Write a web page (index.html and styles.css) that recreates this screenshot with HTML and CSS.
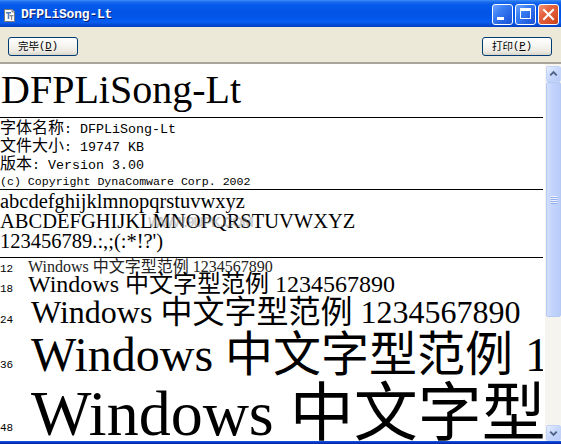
FILE: index.html
```html
<!DOCTYPE html>
<html lang="zh-CN">
<head>
<meta charset="utf-8">
<title>DFPLiSong-Lt</title>
<link rel="stylesheet" href="styles.css">
</head>
<body>
<div class="window">
  <div class="titlebar">
    <svg class="app-icon" width="13" height="13" viewBox="0 0 13 13">
      <path d="M1.5 0.5 H9 L11.5 3 V12.5 H1.5 Z" fill="#fff" stroke="#7a7a7a"/>
      <path d="M9 0.5 V3 H11.5" fill="#dcdcdc" stroke="#7a7a7a"/>
      <rect x="3" y="3" width="5" height="1.6" fill="#5a7fb8"/>
      <rect x="4.7" y="3" width="1.6" height="7" fill="#5a7fb8"/>
      <rect x="6.5" y="6" width="4" height="1.3" fill="#8a8a8a"/>
      <rect x="7.9" y="6" width="1.3" height="5" fill="#8a8a8a"/>
    </svg>
    <span class="title">DFPLiSong-Lt</span>
    <div class="caption-buttons">
      <div class="cbtn cbtn-blue"><span class="min-bar"></span></div>
      <div class="cbtn cbtn-blue"><span class="max-box"></span></div>
      <div class="cbtn cbtn-close">
        <svg width="19" height="19" viewBox="0 0 19 19"><path d="M5 5 L14 14 M14 5 L5 14" stroke="#fff" stroke-width="2" stroke-linecap="square"/></svg>
      </div>
    </div>
  </div>

  <div class="toolbar">
    <div class="btn"><span class="cjk-ui">完毕</span><span class="ui-latin">(<u>D</u>)</span></div>
    <div class="btn"><span class="cjk-ui">打印</span><span class="ui-latin">(<u>P</u>)</span></div>
  </div>

  <div class="client">
    <div class="content">
      <div class="heading">DFPLiSong-Lt</div>

      <div class="info">
        <div class="info-line"><span class="cjk">字体名称</span>: DFPLiSong-Lt</div>
        <div class="info-line"><span class="cjk">文件大小</span>: 19747 KB</div>
        <div class="info-line"><span class="cjk">版本</span>: Version 3.00</div>
        <div class="info-copy">(c) Copyright DynaComware Corp. 2002</div>
      </div>

      <div class="alphabet">
        <div class="alpha-line">abcdefghijklmnopqrstuvwxyz</div>
        <div class="alpha-line">ABCDEFGHIJKLMNOPQRSTUVWXYZ</div>
        <div class="alpha-line">123456789.:,;(:*!?')</div>
        <span class="watermark">WWW.9UPK.COM</span>
      </div>

      <div class="samples">
        <div class="sample-row row-12"><span class="size-label">12</span><span class="sample">Windows 中文字型范例 1234567890</span></div>
        <div class="sample-row row-18"><span class="size-label">18</span><span class="sample">Windows 中文字型范例 1234567890</span></div>
        <div class="sample-row row-24"><span class="size-label">24</span><span class="sample">Windows 中文字型范例 1234567890</span></div>
        <div class="sample-row row-36"><span class="size-label">36</span><span class="sample">Windows 中文字型范例 1234567890</span></div>
        <div class="sample-row row-48"><span class="size-label">48</span><span class="sample">Windows 中文字型范例 1234567890</span></div>
      </div>
    </div>

    <div class="scrollbar">
      <div class="sb-btn">
        <svg width="14" height="14" viewBox="0 0 14 14"><path d="M3.5 8.5 L7 5 L10.5 8.5" fill="none" stroke="#4d6185" stroke-width="2"/></svg>
      </div>
      <div class="sb-thumb">
        <span class="grip"></span><span class="grip"></span><span class="grip"></span><span class="grip"></span>
      </div>
      <div class="sb-track"></div>
      <div class="sb-btn">
        <svg width="14" height="14" viewBox="0 0 14 14"><path d="M3.5 5.5 L7 9 L10.5 5.5" fill="none" stroke="#4d6185" stroke-width="2"/></svg>
      </div>
    </div>
  </div>

  <div class="frame-bottom"></div>
</div>
</body>
</html>
```

FILE: styles.css
```css
html, body {
  margin: 0;
  padding: 0;
}

body {
  width: 561px;
  height: 444px;
  overflow: hidden;
  background: #ffffff;
}

.window {
  display: flex;
  flex-direction: column;
  width: 561px;
  height: 444px;
}

/* ---------- title bar ---------- */
.titlebar {
  flex: none;
  height: 27px;
  display: flex;
  align-items: center;
  background: linear-gradient(to bottom,
    #3d8cf6 0px, #1a6cf0 2px, #0659ea 5px, #0054e6 14px,
    #0359ec 20px, #0a5ff2 22px, #0449d2 25px, #0340c2 27px);
}

.app-icon {
  flex: none;
  margin-left: 3px;
  margin-top: 3px;
}

.title {
  margin-left: 5px;
  margin-top: 2px;
  font-family: "Liberation Mono", monospace;
  font-weight: bold;
  font-size: 13px;
  color: #ffffff;
  text-shadow: 1px 1px 0 #0a1d6e;
  letter-spacing: -0.2px;
}

.caption-buttons {
  margin-left: auto;
  margin-right: 2px;
  margin-top: 2px;
  display: flex;
  gap: 2px;
}

.cbtn {
  position: relative;
  width: 21px;
  height: 21px;
  box-sizing: border-box;
  border: 1px solid #ffffff;
  border-radius: 3px;
}

.cbtn-blue {
  background: linear-gradient(135deg, #6ea6ff 0%, #3b7ef2 35%, #2460e2 75%, #1c55d4 100%);
}

.cbtn-close {
  background: linear-gradient(135deg, #f2967a 0%, #e4643f 35%, #d9502b 75%, #c43d18 100%);
}

.min-bar {
  position: absolute;
  left: 4px;
  top: 12px;
  width: 7px;
  height: 3px;
  background: #ffffff;
}

.max-box {
  position: absolute;
  left: 4px;
  top: 3px;
  width: 11px;
  height: 11px;
  box-sizing: border-box;
  border: 1px solid #ffffff;
  border-top-width: 3px;
}

.cbtn-close svg {
  display: block;
}

/* ---------- toolbar ---------- */
.toolbar {
  flex: none;
  height: 37px;
  box-sizing: border-box;
  padding: 10px 9px 0 8px;
  display: flex;
  justify-content: space-between;
  align-items: flex-start;
  background: #ece9d8;
  border-bottom: 2px solid #a8a59b;
}

.btn {
  width: 70px;
  height: 19px;
  box-sizing: border-box;
  padding-left: 9px;
  display: flex;
  align-items: center;
  border: 1px solid #003c74;
  border-radius: 3px;
  background: linear-gradient(to bottom, #ffffff 0%, #f6f5f0 45%, #ebe9e1 80%, #d8d4c8 100%);
  color: #000000;
}

.cjk-ui {
  font-family: "Noto Sans CJK SC", sans-serif;
  font-size: 10.5px;
  line-height: 1;
}

.ui-latin {
  font-family: "Liberation Mono", monospace;
  font-size: 10.5px;
  line-height: 1;
}

.ui-latin u {
  text-underline-offset: 1px;
}

/* ---------- client area ---------- */
.client {
  flex: none;
  height: 377px;
  display: flex;
  background: #ffffff;
}

.content {
  width: 543px;
  margin-right: 2px;
  overflow: hidden;
  color: #000000;
}

.heading {
  padding: 2px 0 3px 1px;
  border-bottom: 1px solid #000000;
  font-family: "Liberation Serif", serif;
  font-size: 40px;
  line-height: 48px;
  white-space: nowrap;
}

.info {
  padding-top: 3px;
  border-bottom: 1px solid #000000;
  font-family: "Liberation Mono", monospace;
  font-size: 13.33px;
}

.info-line {
  height: 18px;
  line-height: 18px;
  white-space: nowrap;
}

.cjk {
  font-family: "Noto Sans CJK SC", sans-serif;
  font-size: 16px;
  line-height: 0;
}

.info-copy {
  height: 14px;
  line-height: 14px;
  font-size: 11.6px;
  white-space: nowrap;
}

.alphabet {
  position: relative;
  padding: 1px 0 6px 0;
  border-bottom: 1px solid #000000;
  font-family: "Liberation Serif", serif;
  font-size: 20.5px;
}

.alpha-line {
  height: 20px;
  line-height: 20px;
  white-space: nowrap;
}

.watermark {
  position: absolute;
  left: 148px;
  top: 24px;
  font-family: "Liberation Sans", sans-serif;
  font-weight: bold;
  font-size: 14px;
  letter-spacing: -1px;
  color: rgba(140, 140, 140, 0.45);
}

.samples {
  padding-top: 1px;
}

.sample-row {
  white-space: nowrap;
  font-family: "Liberation Serif", "Noto Sans CJK SC", serif;
  line-height: 1;
}

.size-label {
  display: inline-block;
  width: 28px;
  font-family: "Liberation Mono", monospace;
  font-size: 11px;
  line-height: 1;
}

.row-12 { font-size: 16px; }
.row-12 .sample { color: #222; }
.row-18 { font-size: 24px; margin-top: -3px; }
.row-24 { font-size: 32px; }
.row-24 .sample { margin-left: 3px; }
.row-36 { font-size: 48px; margin-top: 3px; }
.row-36 .sample { margin-left: 3px; }
.row-36 .size-label { vertical-align: 3px; }
.row-48 { font-size: 64px; margin-top: 3px; }
.row-48 .sample { margin-left: 3px; }
.row-48 .size-label { vertical-align: 4px; }

/* ---------- scrollbar ---------- */
.scrollbar {
  flex: none;
  width: 16px;
  display: flex;
  flex-direction: column;
  padding: 2px 0 0 0;
  box-sizing: border-box;
  background: #f5f4ef;
}

.sb-btn {
  flex: none;
  height: 16px;
  width: 15px;
  margin-left: 1px;
  box-sizing: border-box;
  border: 1px solid #c3d3f8;
  border-radius: 2px;
  background: linear-gradient(135deg, #e6eeff 0%, #c9d9fd 45%, #b7cbf8 100%);
  display: flex;
  align-items: center;
  justify-content: center;
}

.sb-thumb {
  flex: none;
  height: 235px;
  width: 15px;
  margin-left: 1px;
  box-sizing: border-box;
  border: 1px solid #b6c9f4;
  border-radius: 2px;
  background: linear-gradient(to right, #d2defd 0%, #c3d4fc 40%, #b9cdfa 100%);
  display: flex;
  flex-direction: column;
  justify-content: center;
  align-items: center;
  gap: 1px;
}

.grip {
  width: 6px;
  height: 1px;
  background: #eef3ff;
  box-shadow: 0 1px 0 #8faef0;
}

.sb-track {
  flex: 1;
}

/* ---------- frame ---------- */
.frame-bottom {
  flex: none;
  height: 3px;
  background: linear-gradient(to bottom, #1a5ae0, #0838c8, #0022a8);
}
```
